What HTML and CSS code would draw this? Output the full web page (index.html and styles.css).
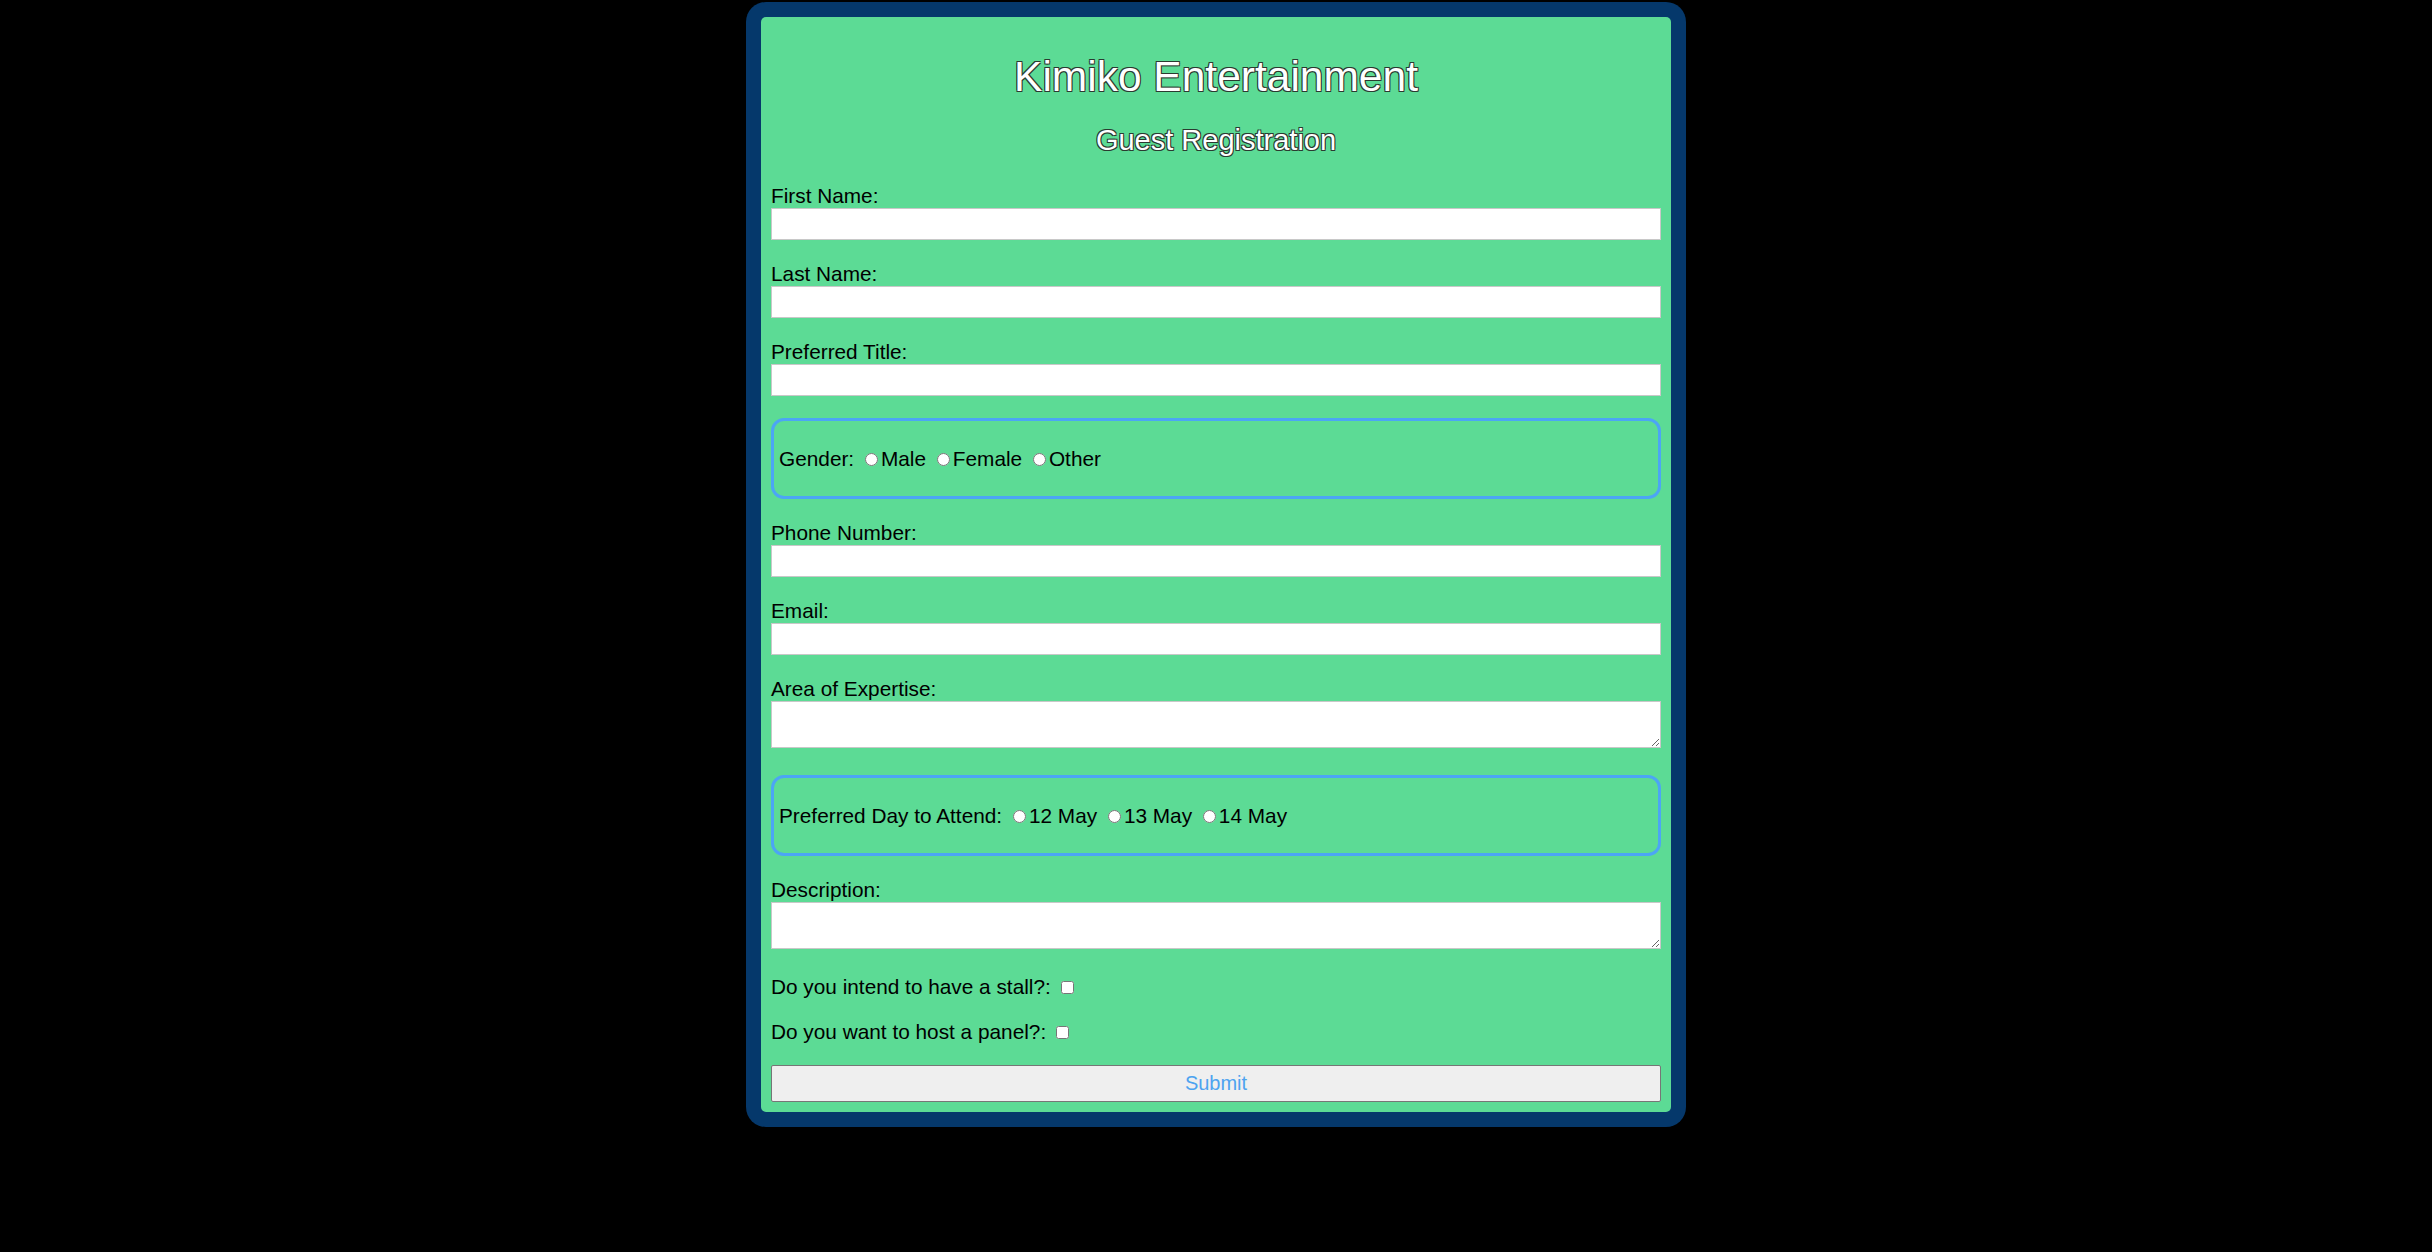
FILE: index.html
```html
<!DOCTYPE html>
<html lang="en">
<head>
<meta charset="utf-8">
<title>Kimiko Entertainment - Guest Registration</title>
<link rel="stylesheet" href="styles.css">
</head>
<body>
<div class="frame">
  <div class="card">
    <h1 class="title">Kimiko Entertainment</h1>
    <h2 class="subtitle">Guest Registration</h2>
    <form class="form">
      <div class="field">
        <label class="label" for="fn">First Name:</label>
        <input class="text" id="fn" type="text">
      </div>
      <div class="field">
        <label class="label" for="ln">Last Name:</label>
        <input class="text" id="ln" type="text">
      </div>
      <div class="field">
        <label class="label" for="pt">Preferred Title:</label>
        <input class="text" id="pt" type="text">
      </div>
      <div class="choice">
        <div class="options">Gender: <input type="radio" name="g" id="gm"><label for="gm">Male</label> <input type="radio" name="g" id="gf"><label for="gf">Female</label> <input type="radio" name="g" id="go"><label for="go">Other</label></div>
      </div>
      <div class="field">
        <label class="label" for="ph">Phone Number:</label>
        <input class="text" id="ph" type="tel">
      </div>
      <div class="field">
        <label class="label" for="em">Email:</label>
        <input class="text" id="em" type="email">
      </div>
      <div class="field field-area">
        <label class="label" for="ae">Area of Expertise:</label>
        <textarea class="area" id="ae"></textarea>
      </div>
      <div class="choice">
        <div class="options">Preferred Day to Attend: <input type="radio" name="d" id="d12"><label for="d12">12 May</label> <input type="radio" name="d" id="d13"><label for="d13">13 May</label> <input type="radio" name="d" id="d14"><label for="d14">14 May</label></div>
      </div>
      <div class="field field-area field-last">
        <label class="label" for="de">Description:</label>
        <textarea class="area" id="de"></textarea>
      </div>
      <div class="check-row"><label for="st">Do you intend to have a stall?:</label> <input type="checkbox" id="st"></div>
      <div class="check-row"><label for="pn">Do you want to host a panel?:</label> <input type="checkbox" id="pn"></div>
      <button class="submit" type="button">Submit</button>
    </form>
  </div>
</div>
</body>
</html>
```
FILE: styles.css
```css
html, body {
  margin: 0;
  padding: 0;
  background: #000;
}

body {
  font-family: "Liberation Sans", Arial, sans-serif;
  font-size: 20.8px;
  color: #000;
}

.frame {
  width: 910px;
  margin: 2px auto 0;
  padding: 15px;
  background: #05386b;
  border-radius: 20px;
}

.card {
  background: #5cdb95;
  border-radius: 5px;
  padding: 10px;
}

.title {
  margin: 26px 0 0;
  font-size: 42.5px;
  line-height: 48px;
  font-weight: normal;
  text-align: center;
  color: #fff;
  text-shadow: -1px -1px 0 #2a3a30, 1px -1px 0 #2a3a30, -1px 1px 0 #2a3a30, 1px 1px 0 #2a3a30;
}

.subtitle {
  margin: 23px 0 0;
  font-size: 29px;
  line-height: 33px;
  font-weight: normal;
  text-align: center;
  color: #fff;
  text-shadow: -1px -1px 0 #2a3a30, 1px -1px 0 #2a3a30, -1px 1px 0 #2a3a30, 1px 1px 0 #2a3a30;
}

.form {
  margin: 27px 0 0;
  display: flex;
  flex-direction: column;
}

.field {
  display: flex;
  flex-direction: column;
  margin-bottom: 22px;
}

.field-area {
  margin-bottom: 27px;
}

.field-last {
  margin-bottom: 25.5px;
}

.label {
  line-height: 24px;
}

.text {
  box-sizing: border-box;
  width: 100%;
  height: 32px;
  margin: 0;
  border: 1px solid #c8c8c8;
  background: #fff;
  font-family: inherit;
  font-size: 16px;
}

.area {
  box-sizing: border-box;
  width: 100%;
  height: 47px;
  margin: 0;
  border: 1px solid #c8c8c8;
  background: #fff;
  font-family: inherit;
  font-size: 16px;
}

.choice {
  box-sizing: border-box;
  height: 81px;
  border: 3px solid #4ca5f5;
  border-radius: 13px;
  padding: 0 5px;
  display: flex;
  align-items: center;
  margin-bottom: 22px;
}

.options {
  line-height: 24px;
}

.check-row {
  line-height: 24px;
  margin-bottom: 21px;
}

.submit {
  box-sizing: border-box;
  width: 100%;
  height: 37px;
  margin: 0;
  background: #efefef;
  border: 1px solid #767676;
  border-radius: 2px;
  color: #4da3f0;
  font-family: inherit;
  font-size: 20px;
}
```
